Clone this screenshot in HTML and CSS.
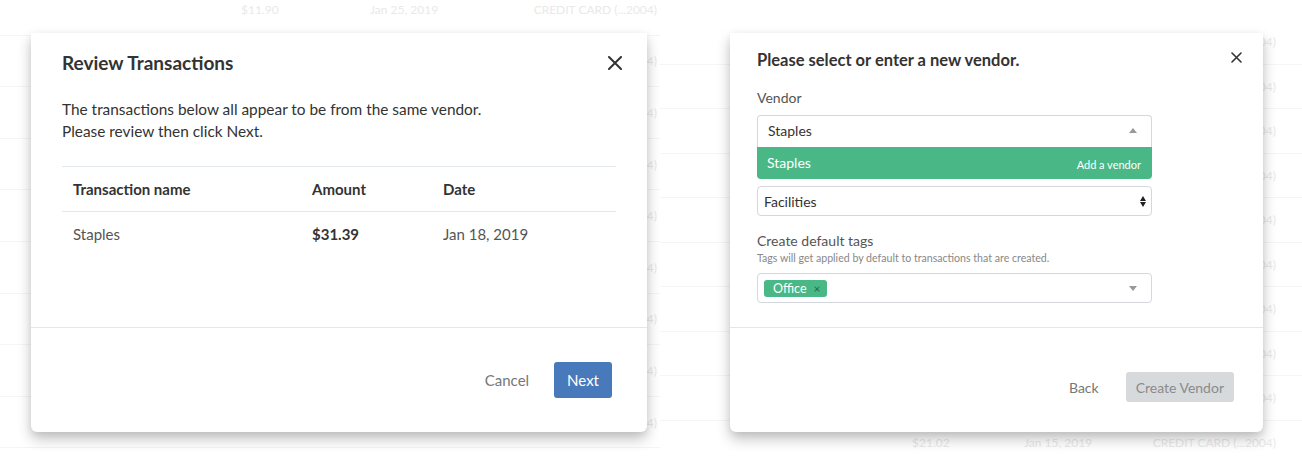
FILE: index.html
```html
<!DOCTYPE html>
<html lang="en">
<head>
<meta charset="utf-8">
<title>Review Transactions</title>
<link rel="stylesheet" href="styles.css">
</head>
<body>
<div class="page">
  <section class="screen screen-left">
    <div class="bg-table bg-left">
      <div class="bg-row"><span>$11.90</span><span>Jan 25, 2019</span><span class="card">CREDIT CARD (...2004)</span></div>
      <div class="bg-row"><span></span><span></span><span class="card">2004)</span></div>
      <div class="bg-row"><span></span><span></span><span class="card">2004)</span></div>
      <div class="bg-row"><span></span><span></span><span class="card">2004)</span></div>
      <div class="bg-row"><span></span><span></span><span class="card">2004)</span></div>
      <div class="bg-row"><span></span><span></span><span class="card">2004)</span></div>
      <div class="bg-row"><span></span><span></span><span class="card">2004)</span></div>
      <div class="bg-row"><span></span><span></span><span class="card">2004)</span></div>
      <div class="bg-row"><span></span><span></span><span class="card">2004)</span></div>
    </div>

    <div class="modal modal-review">
      <header class="modal-header">
        <h2 class="modal-title">Review Transactions</h2>
        <button class="close-btn" type="button" aria-label="Close">
          <svg width="14" height="14" viewBox="0 0 14 14"><path d="M1 1L13 13M13 1L1 13" stroke="#333" stroke-width="2" stroke-linecap="round"/></svg>
        </button>
      </header>
      <div class="modal-body">
        <p class="intro">The transactions below all appear to be from the same vendor.<br>Please review then click Next.</p>
        <table class="tx-table">
          <thead>
            <tr><th class="c-name">Transaction name</th><th class="c-amount">Amount</th><th class="c-date">Date</th></tr>
          </thead>
          <tbody>
            <tr><td>Staples</td><td class="amount">$31.39</td><td>Jan 18, 2019</td></tr>
          </tbody>
        </table>
      </div>
      <footer class="modal-footer">
        <button class="link-btn" type="button">Cancel</button>
        <button class="primary-btn" type="button">Next</button>
      </footer>
    </div>
  </section>

  <section class="screen screen-right">
    <div class="bg-table bg-right">
      <div class="bg-row"><span></span><span></span><span class="card">2004)</span></div>
      <div class="bg-row"><span></span><span></span><span class="card">2004)</span></div>
      <div class="bg-row"><span></span><span></span><span class="card">2004)</span></div>
      <div class="bg-row"><span></span><span></span><span class="card">2004)</span></div>
      <div class="bg-row"><span></span><span></span><span class="card">2004)</span></div>
      <div class="bg-row"><span></span><span></span><span class="card">2004)</span></div>
      <div class="bg-row"><span></span><span></span><span class="card">2004)</span></div>
      <div class="bg-row"><span></span><span></span><span class="card">2004)</span></div>
      <div class="bg-row"><span></span><span></span><span class="card">2004)</span></div>
      <div class="bg-row"><span>$21.02</span><span>Jan 15, 2019</span><span class="card">CREDIT CARD (...2004)</span></div>
    </div>

    <div class="modal modal-vendor">
      <header class="modal-header vendor-header">
        <h2 class="modal-title vendor-title">Please select or enter a new vendor.</h2>
        <button class="close-btn small" type="button" aria-label="Close">
          <svg width="11" height="11" viewBox="0 0 11 11"><path d="M1 1L10 10M10 1L1 10" stroke="#333" stroke-width="1.6" stroke-linecap="round"/></svg>
        </button>
      </header>
      <div class="modal-body vendor-body">
        <label class="field-label">Vendor</label>
        <div class="combo">
          <div class="combo-input">
            <span>Staples</span>
            <span class="tri tri-up"></span>
          </div>
          <div class="combo-option">
            <span>Staples</span>
            <span class="option-hint">Add a vendor</span>
          </div>
        </div>
        <div class="select">
          <span>Facilities</span>
          <span class="updown"><span class="tri tri-up dark"></span><span class="tri tri-down dark"></span></span>
        </div>
        <label class="field-label tags-label">Create default tags</label>
        <div class="help">Tags will get applied by default to transactions that are created.</div>
        <div class="tags-input">
          <span class="tag">Office <span class="tag-x">×</span></span>
          <span class="tri tri-down"></span>
        </div>
      </div>
      <footer class="modal-footer vendor-footer">
        <button class="link-btn" type="button">Back</button>
        <button class="disabled-btn" type="button">Create Vendor</button>
      </footer>
    </div>
  </section>
</div>
</body>
</html>
```

FILE: styles.css
```css
* { box-sizing: border-box; }

html, body {
  margin: 0;
  padding: 0;
  background: #fff;
}

body {
  font-family: "Lato", "Open Sans", "Liberation Sans", sans-serif;
  color: #333;
  width: 1302px;
  height: 458px;
  overflow: hidden;
}

.page {
  display: flex;
  width: 1302px;
  height: 458px;
}

.screen {
  position: relative;
  height: 458px;
  overflow: hidden;
}

.screen-left { width: 660px; }
.screen-right { width: 642px; }

/* faded table in the background */
.bg-table {
  color: #e9e9e9;
  font-size: 12px;
}

.bg-row {
  display: grid;
  align-items: center;
  border-bottom: 1px solid #f5f5f5;
  white-space: nowrap;
}

.bg-row .card { text-align: right; }

.bg-left { margin-top: -16px; }
.bg-left .bg-row {
  height: 51.6px;
  padding-left: 241px;
  grid-template-columns: 129px 163px 124px;
}

.bg-right { margin-top: 20px; }
.bg-right .bg-row {
  height: 44.5px;
  padding-left: 252px;
  grid-template-columns: 112px 128px 124px;
}

/* modals */
.modal {
  position: absolute;
  top: 33px;
  height: 399px;
  background: #fff;
  border-radius: 0 0 6px 6px;
  box-shadow: 0 7px 14px rgba(0, 0, 0, 0.24), 0 2px 6px rgba(0, 0, 0, 0.06);
  display: flex;
  flex-direction: column;
}

.modal-review {
  left: 31px;
  width: 616px;
}

.modal-vendor {
  left: 70px;
  width: 533px;
}

.modal-header {
  display: flex;
  align-items: center;
  justify-content: space-between;
  padding: 18px 25px 0 31px;
}

.modal-title {
  margin: 0;
  font-size: 19px;
  line-height: 24px;
  font-weight: 700;
  color: #333;
}

.close-btn {
  border: 0;
  background: none;
  padding: 0;
  display: flex;
  cursor: pointer;
}

.modal-body {
  flex: 1;
  padding: 0 31px;
}

.intro {
  margin: 23px 0 0;
  font-size: 15.4px;
  line-height: 22px;
  color: #333;
}

.tx-table {
  margin-top: 24px;
  width: 100%;
  border-collapse: collapse;
  font-size: 15px;
}

.tx-table th,
.tx-table td {
  text-align: left;
  padding: 0 0 0 11px;
  height: 45px;
  border-top: 1px solid #e3e8ec;
}

.tx-table th {
  font-weight: 700;
  color: #333;
}

.tx-table td { color: #555; }
.tx-table td.amount { font-weight: 700; color: #333; }

.c-name { width: 239px; }
.c-amount { width: 131px; }

.modal-footer {
  height: 105px;
  border-top: 1px solid #e6e6e6;
  display: flex;
  align-items: center;
  justify-content: flex-end;
  gap: 25px;
  padding-right: 35px;
}

.link-btn {
  border: 0;
  background: none;
  padding: 0;
  font-family: inherit;
  font-size: 15px;
  color: #777;
}

.primary-btn {
  border: 0;
  border-radius: 3px;
  background: #4879bb;
  color: #fff;
  font-family: inherit;
  font-size: 15px;
  height: 36px;
  padding: 0 13px;
}

/* vendor modal */
.vendor-header {
  padding: 16px 21px 0 27px;
}

.vendor-title {
  font-size: 16.5px;
  line-height: 22px;
}

.vendor-header .close-btn { margin-top: -6px; }

.vendor-body {
  padding: 0 27px;
  display: flex;
  flex-direction: column;
  align-items: flex-start;
}

.field-label {
  display: block;
  margin-top: 17px;
  font-size: 14px;
  line-height: 20px;
  color: #555;
}

.combo {
  margin-top: 7px;
  width: 395px;
}

.combo-input {
  height: 32px;
  border: 1px solid #d4d7db;
  border-bottom: 0;
  border-radius: 4px 4px 0 0;
  display: flex;
  align-items: center;
  justify-content: space-between;
  padding: 0 14px 2px 10px;
  font-size: 14px;
  color: #333;
}

.combo-option {
  height: 32px;
  background: #49b886;
  border-radius: 0 0 4px 4px;
  color: #fff;
  display: flex;
  align-items: center;
  justify-content: space-between;
  padding: 0 11px 2px 10px;
  font-size: 14px;
}

.option-hint {
  font-size: 11px;
  margin-top: 4px;
}

.tri {
  display: inline-block;
  width: 0;
  height: 0;
  border-left: 4px solid transparent;
  border-right: 4px solid transparent;
}

.tri-up { border-bottom: 5px solid #999; }
.tri-down { border-top: 5px solid #999; }
.tri-up.dark { border-bottom-color: #222; border-left-width: 3.5px; border-right-width: 3.5px; border-bottom-width: 5px; }
.tri-down.dark { border-top-color: #222; border-left-width: 3.5px; border-right-width: 3.5px; border-top-width: 5px; }

.select {
  margin-top: 7px;
  width: 395px;
  height: 30px;
  border: 1px solid #d4d7db;
  border-radius: 4px;
  display: flex;
  align-items: center;
  justify-content: space-between;
  padding: 0 5px 0 6px;
  font-size: 14px;
  color: #333;
}

.updown {
  display: flex;
  flex-direction: column;
  gap: 1px;
}

.tags-label { margin-top: 15px; }

.help {
  font-size: 10.6px;
  line-height: 14px;
  color: #888;
}

.tags-input {
  margin-top: 8px;
  width: 395px;
  height: 30px;
  border: 1px solid #d4d7db;
  border-radius: 4px;
  display: flex;
  align-items: center;
  justify-content: space-between;
  padding: 0 14px 0 6px;
}

.tag {
  background: #49b886;
  color: #fff;
  font-size: 12.5px;
  height: 17px;
  line-height: 17px;
  border-radius: 3px;
  padding: 0 7px 0 9px;
  display: inline-flex;
  gap: 7px;
}

.tag-x {
  color: #1f6b45;
  font-size: 12px;
}

.vendor-footer {
  padding-top: 14px;
  padding-right: 29px;
  gap: 27px;
}

.vendor-footer .link-btn { font-size: 14px; }

.disabled-btn {
  border: 0;
  border-radius: 3px;
  background: #d7dadd;
  color: #8a8a8a;
  font-family: inherit;
  font-size: 14px;
  height: 30px;
  padding: 0 10px;
}
```
